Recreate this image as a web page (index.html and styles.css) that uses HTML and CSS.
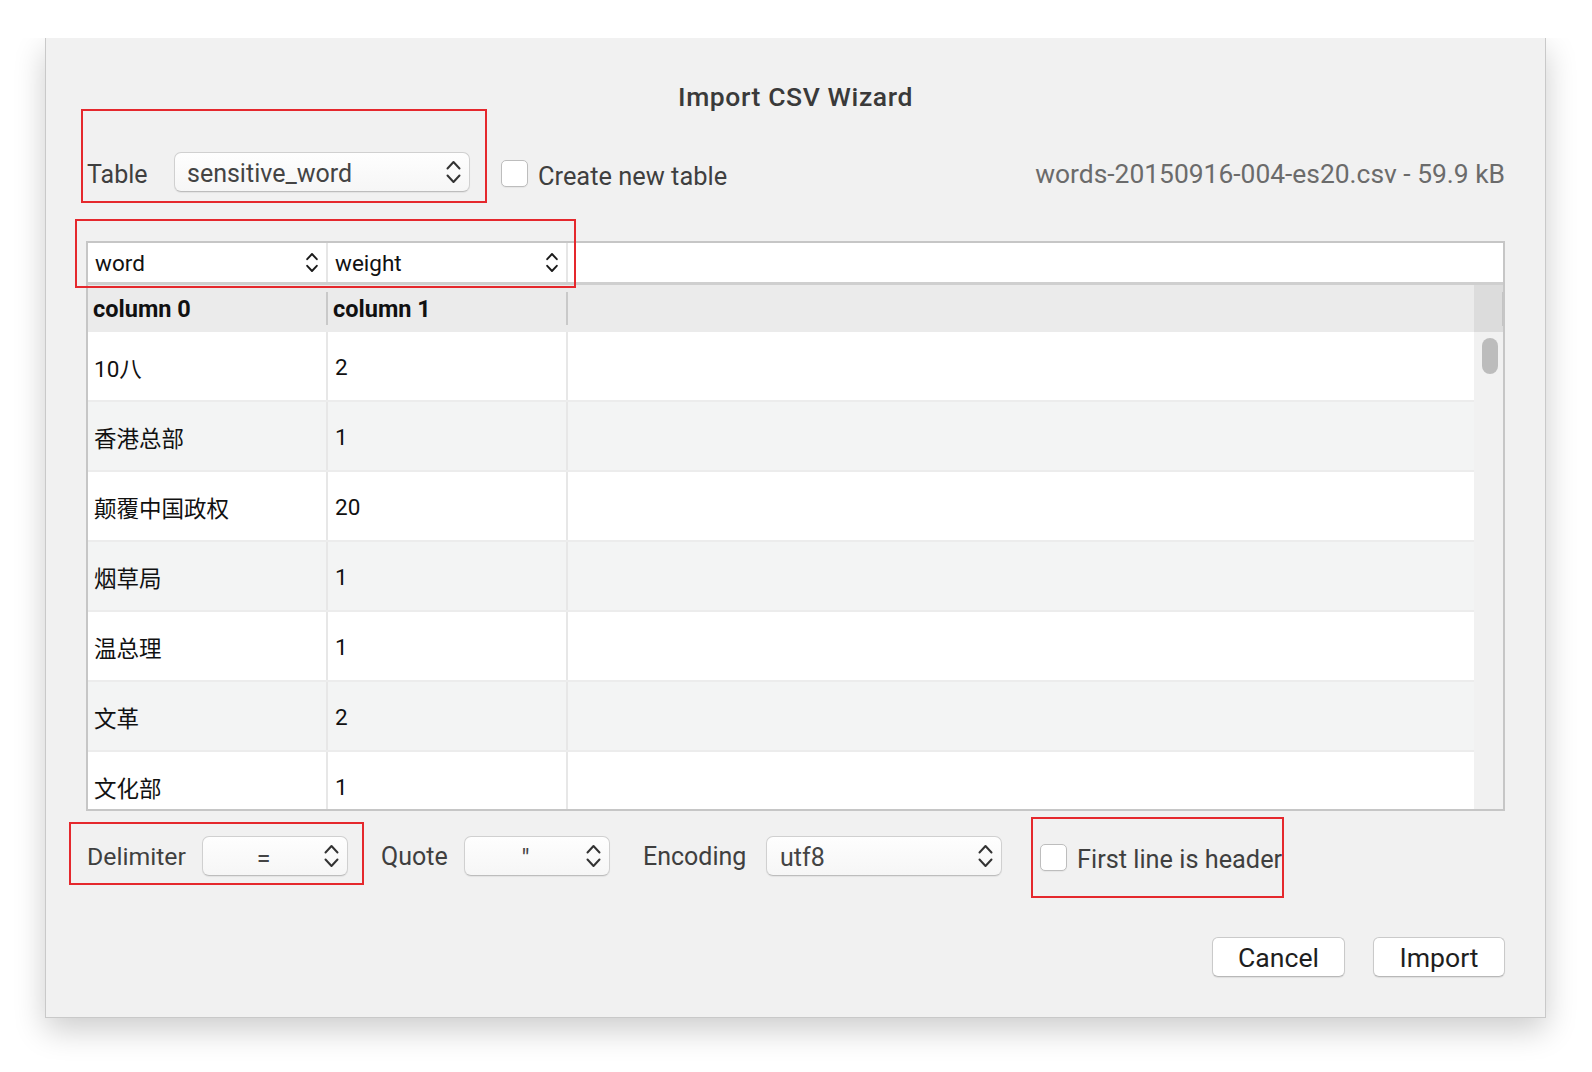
FILE: index.html
```html
<!DOCTYPE html>
<html lang="zh-CN">
<head>
<meta charset="utf-8">
<title>Import CSV Wizard</title>
<link rel="stylesheet" href="styles.css">
</head>
<body>
<div class="dialog">
  <h1 class="title">Import CSV Wizard</h1>

  <div class="top-row">
    <span class="label label-table">Table</span>
    <div class="combo combo-table">
      <span class="combo-text">sensitive_word</span>
      <svg class="chev" viewBox="0 0 15 24" width="15" height="24"><path d="M1.5 8.5 L7.5 2 L13.5 8.5 M1.5 15.5 L7.5 22 L13.5 15.5"/></svg>
    </div>
    <label class="check check-new"><span class="box"></span><span class="check-text">Create new table</span></label>
    <span class="file-info">words-20150916-004-es20.csv - 59.9 kB</span>
  </div>

  <div class="grid">
    <div class="map-bar">
      <div class="map-cell"><span>word</span><svg class="chev-s" viewBox="0 0 12 21" width="12" height="21"><path d="M1.2 7.2 L6 2 L10.8 7.2 M1.2 13.8 L6 19 L10.8 13.8"/></svg></div>
      <div class="map-cell"><span>weight</span><svg class="chev-s" viewBox="0 0 12 21" width="12" height="21"><path d="M1.2 7.2 L6 2 L10.8 7.2 M1.2 13.8 L6 19 L10.8 13.8"/></svg></div>
    </div>
    <div class="grid-body">
      <div class="grid-main">
        <div class="grid-head">
          <div class="hcell">column 0</div><div class="hsep"></div>
          <div class="hcell">column 1</div><div class="hsep"></div>
          <div class="hrest"></div>
        </div>
        <div class="grid-row"><div class="cell c0">10八</div><div class="cell c1">2</div><div class="cell rest"></div></div>
        <div class="grid-row alt"><div class="cell c0">香港总部</div><div class="cell c1">1</div><div class="cell rest"></div></div>
        <div class="grid-row"><div class="cell c0">颠覆中国政权</div><div class="cell c1">20</div><div class="cell rest"></div></div>
        <div class="grid-row alt"><div class="cell c0">烟草局</div><div class="cell c1">1</div><div class="cell rest"></div></div>
        <div class="grid-row"><div class="cell c0">温总理</div><div class="cell c1">1</div><div class="cell rest"></div></div>
        <div class="grid-row alt"><div class="cell c0">文革</div><div class="cell c1">2</div><div class="cell rest"></div></div>
        <div class="grid-row"><div class="cell c0">文化部</div><div class="cell c1">1</div><div class="cell rest"></div></div>
      </div>
      <div class="vscroll">
        <div class="corner"></div>
        <div class="track"><div class="thumb"></div></div>
      </div>
    </div>
  </div>

  <div class="bottom-row">
    <span class="label label-delim">Delimiter</span>
    <div class="combo combo-small combo-center">
      <span class="combo-text">=</span>
      <svg class="chev" viewBox="0 0 15 24" width="15" height="24"><path d="M1.5 8.5 L7.5 2 L13.5 8.5 M1.5 15.5 L7.5 22 L13.5 15.5"/></svg>
    </div>
    <span class="label label-quote">Quote</span>
    <div class="combo combo-small combo-center">
      <span class="combo-text">"</span>
      <svg class="chev" viewBox="0 0 15 24" width="15" height="24"><path d="M1.5 8.5 L7.5 2 L13.5 8.5 M1.5 15.5 L7.5 22 L13.5 15.5"/></svg>
    </div>
    <span class="label label-enc">Encoding</span>
    <div class="combo combo-enc">
      <span class="combo-text">utf8</span>
      <svg class="chev" viewBox="0 0 15 24" width="15" height="24"><path d="M1.5 8.5 L7.5 2 L13.5 8.5 M1.5 15.5 L7.5 22 L13.5 15.5"/></svg>
    </div>
    <label class="check check-first"><span class="box"></span><span class="check-text">First line is header</span></label>
  </div>

  <div class="buttons">
    <button class="btn btn-cancel">Cancel</button>
    <button class="btn btn-import">Import</button>
  </div>

  <div class="mark mark-table"></div>
  <div class="mark mark-map"></div>
  <div class="mark mark-delim"></div>
  <div class="mark mark-header"></div>
</div>
</body>
</html>
```
FILE: styles.css
```css
* { box-sizing: border-box; }

html, body {
  margin: 0;
  padding: 0;
  background: #ffffff;
}

body {
  font-family: Roboto, "Noto Sans CJK SC", sans-serif;
  color: #3e3e3e;
  overflow: hidden;
  height: 1072px;
}

.dialog {
  position: relative;
  margin: 38px 0 0 45px;
  width: 1501px;
  height: 980px;
  background: #f1f1f1;
  border: 1px solid #c9c9c9;
  border-top: none;
  padding: 42px 40px 0 40px;
  box-shadow: 0 12px 30px rgba(0, 0, 0, 0.2);
  clip-path: inset(0 -80px -80px -80px);
}

.title {
  margin: 0;
  text-align: center;
  font-size: 26.5px;
  font-weight: 500;
  letter-spacing: 0.6px;
  line-height: 32px;
  color: #3a3a3a;
  padding-top: 1px;
}

/* ---------- top row ---------- */
.top-row {
  margin-top: 39px;
  height: 40px;
  display: flex;
  align-items: center;
}

.label {
  font-size: 25px;
  color: #3f3f3f;
  white-space: nowrap;
}

.label-table { width: 88px; padding-left: 1px; padding-top: 4px; }

.combo {
  height: 40px;
  display: flex;
  align-items: center;
  justify-content: space-between;
  background: linear-gradient(#fefefe, #f6f6f6);
  border: 1px solid #d0d0d0;
  border-bottom-color: #bdbdbd;
  border-radius: 7px;
  box-shadow: 0 1px 1px rgba(0, 0, 0, 0.06);
  padding: 0 8px 0 12px;
  font-size: 25px;
  color: #444444;
}

.combo-text {
  white-space: nowrap;
  margin-top: 3px;
}

.combo-table { width: 296px; }

.chev {
  flex: none;
  fill: none;
  stroke: #333333;
  stroke-width: 2;
  stroke-linecap: round;
  stroke-linejoin: round;
}

.check {
  display: flex;
  align-items: center;
}

.box {
  width: 27px;
  height: 27px;
  background: #ffffff;
  border: 1px solid #bdbdbd;
  border-radius: 5px;
  box-shadow: 0 1px 1px rgba(0, 0, 0, 0.05);
  flex: none;
}

.check-text {
  font-size: 25px;
  color: #3f3f3f;
  white-space: nowrap;
  margin-top: 6px;
}

.check-new { margin-left: 31px; margin-top: 2px; }
.check-new .check-text { margin-left: 10px; font-size: 25.4px; }

.file-info {
  margin-left: auto;
  margin-top: 4px;
  font-size: 26.4px;
  color: #6b6b6b;
  white-space: nowrap;
}

/* ---------- grid ---------- */
.grid {
  margin-top: 49px;
  height: 570px;
  border: 2px solid #c6c6c6;
  display: flex;
  flex-direction: column;
  overflow: hidden;
  color: #111111;
  font-size: 22.5px;
}

.map-bar {
  height: 42px;
  flex: none;
  background: #ffffff;
  border-bottom: 3px solid #cfcfcf;
  display: flex;
}

.map-cell {
  width: 240px;
  border-right: 2px solid #e6e6e6;
  display: flex;
  align-items: center;
  justify-content: space-between;
  padding: 0 8px 0 7px;
  color: #111111;
}

.map-cell span { margin-top: 1px; }

.chev-s {
  fill: none;
  stroke: #1a1a1a;
  stroke-width: 1.9;
  stroke-linecap: round;
  stroke-linejoin: round;
}

.grid-body {
  flex: 1;
  min-height: 0;
  display: flex;
}

.grid-main {
  flex: 1;
  min-width: 0;
  overflow: hidden;
}

.grid-head {
  height: 47px;
  background: #ebebeb;
  display: flex;
  align-items: center;
  font-weight: 700;
  font-size: 23.5px;
  color: #111111;
}

.hcell {
  width: 238px;
  padding-left: 5px;
  white-space: nowrap;
}

.hsep {
  width: 2px;
  height: 33px;
  background: #c9c9c9;
}

.hrest { flex: 1; }

.grid-row {
  height: 70px;
  display: flex;
  background: #ffffff;
  border-bottom: 2px solid #ececec;
}

.grid-row.alt { background: #f3f4f4; }

.cell {
  width: 240px;
  border-right: 2px solid #e7e7e7;
  display: flex;
  align-items: center;
  white-space: nowrap;
  padding-top: 1px;
}

.cell.c0 { padding-left: 6px; }
.cell.c1 { padding-left: 7px; }
.cell.rest { flex: 1; border-right: none; }

.vscroll {
  width: 29px;
  flex: none;
  display: flex;
  flex-direction: column;
}

.corner {
  height: 47px;
  background: #dcdcdc;
  display: flex;
  justify-content: flex-end;
  align-items: center;
}

.corner::after {
  content: "";
  width: 1px;
  height: 34px;
  background: #c4c4c4;
}

.track {
  flex: 1;
  background: #f1f1f1;
  padding: 6px 0 0 8px;
}

.thumb {
  width: 16px;
  height: 36px;
  border-radius: 8px;
  background: #bcbcbc;
}

/* ---------- bottom row ---------- */
.bottom-row {
  margin-top: 25px;
  height: 40px;
  display: flex;
  align-items: center;
}

.label-delim { width: 116px; padding-left: 1px; font-size: 24.8px; }
.label-quote { width: 83px; margin-left: 33px; }
.label-enc { width: 123px; margin-left: 33px; }

.combo-small { width: 146px; }

.combo-center { padding-left: 0; }
.combo-center .combo-text {
  flex: 1;
  text-align: center;
  margin-top: 4px;
}

.combo-enc { width: 236px; padding-left: 13px; }

.check-first { margin-left: 38px; margin-top: 3px; }
.check-first .check-text { margin-left: 10px; margin-top: 4px; font-size: 25.3px; }

/* ---------- buttons ---------- */
.buttons {
  margin-top: 61px;
  display: flex;
  justify-content: flex-end;
  gap: 28px;
}

.btn {
  height: 40px;
  background: #ffffff;
  border: 1px solid #cacaca;
  border-bottom-color: #b8b8b8;
  border-radius: 6px;
  box-shadow: 0 1px 1px rgba(0, 0, 0, 0.08);
  font-family: Roboto, sans-serif;
  font-size: 26.6px;
  color: #1e1e1e;
  padding: 0;
}

.btn-cancel { width: 133px; }
.btn-import { width: 132px; }

/* ---------- red annotation marks ---------- */
.mark {
  position: absolute;
  border: 2px solid #e5282d;
  pointer-events: none;
}

.mark-table  { left: 35px;  top: 71px;  width: 406px; height: 94px; }
.mark-map    { left: 29px;  top: 181px; width: 501px; height: 69px; }
.mark-delim  { left: 23px;  top: 784px; width: 295px; height: 63px; }
.mark-header { left: 985px; top: 779px; width: 253px; height: 81px; }
```
